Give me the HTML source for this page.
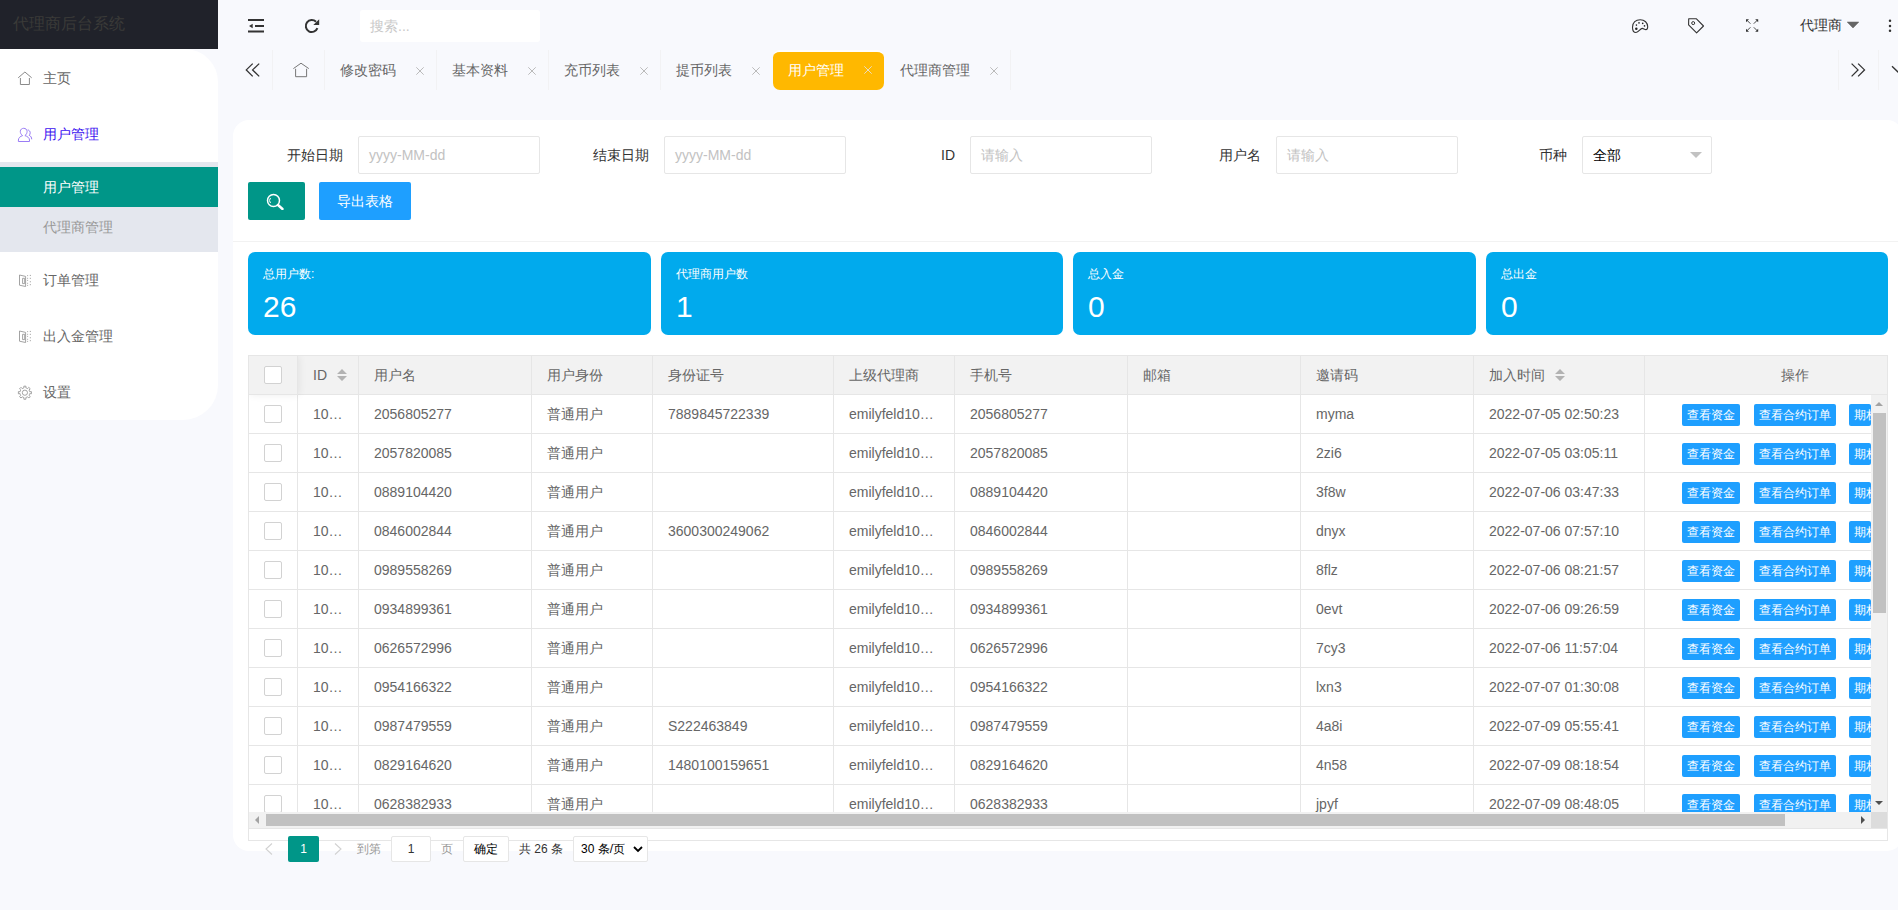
<!DOCTYPE html>
<html><head><meta charset="utf-8"><style>

*{margin:0;padding:0;box-sizing:border-box}
html,body{width:1898px;height:910px;overflow:hidden}
body{background:#f8f9fd;font-family:"Liberation Sans",sans-serif;font-size:14px;color:#666;position:relative}
.abs{position:absolute}
svg{display:block}
/* sidebar */
#logo{left:0;top:0;width:218px;height:49px;background:#20222a}
#logo span{position:absolute;left:13px;top:14px;font-size:16px;line-height:20px;color:#3a3a38;white-space:nowrap}
#side{left:0;top:49px;width:218px;height:371px;background:#fff;border-radius:0 33px 35px 0}
.mi{position:absolute;left:0;width:218px;height:56px}
.mi .ic{position:absolute;left:18px;top:21px}
.mi .tx{position:absolute;left:43px;top:19px;line-height:18px;font-size:14px;color:#666;white-space:nowrap}
#sub{left:0;top:162px;width:218px;height:90px;background:#e4e7ee}
/* header */
.hico{position:absolute}
#search{left:360px;top:10px;width:180px;height:32px;background:#fff;border-radius:3px}
#search span{position:absolute;left:10px;top:7px;line-height:18px;color:#c9c9c9;font-size:14px}
/* tabs */
.sep{position:absolute;top:50px;width:1px;height:40px;background:#f2f2f4}
.tab{position:absolute;top:51px;height:39px}
.tab .t{position:absolute;left:16px;top:10px;line-height:18px;font-size:14px;color:#666;white-space:nowrap}
.tab .x{position:absolute;top:16px}
/* card */
#card{left:233px;top:120px;width:1670px;height:731px;background:#fff;border-radius:16px}
.lbl{position:absolute;top:146px;line-height:18px;font-size:14px;color:#333;white-space:nowrap;text-align:right}
.inp{position:absolute;top:136px;width:182px;height:38px;border:1px solid #e6e6e6;border-radius:2px;background:#fff}
.inp span{position:absolute;left:10px;top:9px;line-height:18px;color:#c2c2c2;font-size:14px;white-space:nowrap}
.btn{position:absolute;top:182px;height:38px;border-radius:2px;color:#fff}
#hline{left:233px;top:241px;width:1665px;height:1px;background:#f2f2f2}
.stat{position:absolute;top:252px;width:403px;height:83px;background:#01aaed;border-radius:7px;color:#fff}
.stat .a{position:absolute;left:15px;top:14px;font-size:12px;line-height:16px;white-space:nowrap}
.stat .b{position:absolute;left:15px;top:37px;font-size:30px;line-height:36px}
/* table */
#tbl{left:248px;top:355px;width:1640px;height:486px;border:1px solid #e6e6e6;background:#fff;overflow:hidden}
#thead{position:absolute;left:0;top:0;width:1638px;height:39px;background:#f2f2f2;border-bottom:1px solid #e6e6e6}
.vl{position:absolute;width:1px;background:#e6e6e6}
.hl{position:absolute;height:1px;background:#e6e6e6;left:0}
.th{position:absolute;top:10px;line-height:18px;font-size:14px;color:#666;white-space:nowrap}
.td{position:absolute;line-height:18px;font-size:14px;color:#666;white-space:nowrap}
.cb{position:absolute;width:18px;height:18px;border:1px solid #d2d2d2;border-radius:2px;background:#fff}
.ob{position:absolute;height:22px;line-height:22px;background:#1e9fff;color:#fff;font-size:12px;border-radius:2px;padding:0 5px;white-space:nowrap;overflow:hidden}

</style></head><body>
<div id="logo" class="abs"><span>代理商后台系统</span></div>
<div id="side" class="abs"></div>
<div id="sub" class="abs"></div>
<div class="abs" style="left:0;top:167px;width:218px;height:40px;background:#009688"></div>
<div class="abs" style="left:43px;top:178px;line-height:18px;color:#fff;white-space:nowrap">用户管理</div>
<div class="abs" style="left:43px;top:218px;line-height:18px;color:#999;white-space:nowrap">代理商管理</div>
<div class="mi" style="top:50px"><div class="tx" style="color:#666">主页</div></div>
<div class="mi" style="top:106px"><div class="tx" style="color:#3d12f0">用户管理</div></div>
<div class="mi" style="top:252px"><div class="tx" style="color:#666">订单管理</div></div>
<div class="mi" style="top:308px"><div class="tx" style="color:#666">出入金管理</div></div>
<div class="mi" style="top:364px"><div class="tx" style="color:#666">设置</div></div>
<div id="search" class="abs"><span>搜索...</span></div>
<div class="abs" style="left:1800px;top:16px;line-height:18px;color:#333;white-space:nowrap">代理商</div>
<div class="abs" style="left:1847px;top:22px;width:0;height:0;border-left:6px solid transparent;border-right:6px solid transparent;border-top:6px solid #555"></div>
<div class="sep" style="left:272px"></div>
<div class="sep" style="left:324px"></div>
<div class="sep" style="left:436px"></div>
<div class="sep" style="left:548px"></div>
<div class="sep" style="left:660px"></div>
<div class="sep" style="left:1010px"></div>
<div class="sep" style="left:1838px"></div>
<div class="sep" style="left:1878px"></div>
<div class="tab" style="left:324px;width:112px"><div class="t">修改密码</div><div class="x" style="left:92px"><svg width="8" height="8" viewBox="0 0 8 8"><path d="M0.3 0.3 L7.7 7.7 M7.7 0.3 L0.3 7.7" stroke="#bbb" stroke-width="1"/></svg></div></div>
<div class="tab" style="left:436px;width:112px"><div class="t">基本资料</div><div class="x" style="left:92px"><svg width="8" height="8" viewBox="0 0 8 8"><path d="M0.3 0.3 L7.7 7.7 M7.7 0.3 L0.3 7.7" stroke="#bbb" stroke-width="1"/></svg></div></div>
<div class="tab" style="left:548px;width:112px"><div class="t">充币列表</div><div class="x" style="left:92px"><svg width="8" height="8" viewBox="0 0 8 8"><path d="M0.3 0.3 L7.7 7.7 M7.7 0.3 L0.3 7.7" stroke="#bbb" stroke-width="1"/></svg></div></div>
<div class="tab" style="left:660px;width:112px"><div class="t">提币列表</div><div class="x" style="left:92px"><svg width="8" height="8" viewBox="0 0 8 8"><path d="M0.3 0.3 L7.7 7.7 M7.7 0.3 L0.3 7.7" stroke="#bbb" stroke-width="1"/></svg></div></div>
<div class="tab" style="left:773px;top:50px;height:40px;width:111px;background:#ffb800;border-top:2px solid #fff;border-radius:7px"><div class="t" style="left:15px;top:9px;color:#fff">用户管理</div><div class="x" style="left:91px;top:14px"><svg width="8" height="8" viewBox="0 0 8 8"><path d="M0.3 0.3 L7.7 7.7 M7.7 0.3 L0.3 7.7" stroke="#eadcc0" stroke-width="1"/></svg></div></div>
<div class="tab" style="left:884px;width:126px"><div class="t">代理商管理</div><div class="x" style="left:106px"><svg width="8" height="8" viewBox="0 0 8 8"><path d="M0.3 0.3 L7.7 7.7 M7.7 0.3 L0.3 7.7" stroke="#bbb" stroke-width="1"/></svg></div></div>
<div id="card" class="abs"></div>
<div class="lbl" style="left:248px;width:95px">开始日期</div>
<div class="inp" style="left:358px"><span>yyyy-MM-dd</span></div>
<div class="lbl" style="left:554px;width:95px">结束日期</div>
<div class="inp" style="left:664px"><span>yyyy-MM-dd</span></div>
<div class="lbl" style="left:860px;width:95px">ID</div>
<div class="inp" style="left:970px"><span>请输入</span></div>
<div class="lbl" style="left:1166px;width:95px">用户名</div>
<div class="inp" style="left:1276px"><span>请输入</span></div>
<div class="lbl" style="left:1472px;width:95px">币种</div>
<div class="inp" style="left:1582px;width:130px"><span style="color:#000">全部</span><div class="abs" style="left:107px;top:15px;width:0;height:0;border-left:6px solid transparent;border-right:6px solid transparent;border-top:6px solid #c2c2c2"></div></div>
<div class="btn" style="left:248px;width:57px;background:#009688"><div class="abs" style="left:18px;top:11px"><svg width="19" height="17" viewBox="0 0 19 17" fill="none" stroke="#fff" stroke-width="1.5"><circle cx="7.5" cy="7.5" r="6"/><path d="M12 12 L16.5 16" stroke-width="2.4" stroke-linecap="round"/><path d="M4.5 5 A3.8 3.8 0 0 0 4.5 10" stroke-width="1"/></svg></div></div>
<div class="btn" style="left:319px;width:92px;background:#1e9fff"><div class="abs" style="left:18px;top:10px;line-height:18px;white-space:nowrap">导出表格</div></div>
<div id="hline" class="abs"></div>
<div class="stat" style="left:248px;width:403px"><div class="a">总用户数:</div><div class="b">26</div></div>
<div class="stat" style="left:661px;width:402px"><div class="a">代理商用户数</div><div class="b">1</div></div>
<div class="stat" style="left:1073px;width:403px"><div class="a">总入金</div><div class="b">0</div></div>
<div class="stat" style="left:1486px;width:402px"><div class="a">总出金</div><div class="b">0</div></div>
<div id="tbl" class="abs"><div class="vl" style="left:48px;top:0;height:460px"></div><div class="vl" style="left:109px;top:0;height:460px"></div><div class="vl" style="left:282px;top:0;height:460px"></div><div class="vl" style="left:403px;top:0;height:460px"></div><div class="vl" style="left:584px;top:0;height:460px"></div><div class="vl" style="left:705px;top:0;height:460px"></div><div class="vl" style="left:878px;top:0;height:460px"></div><div class="vl" style="left:1051px;top:0;height:460px"></div><div class="vl" style="left:1224px;top:0;height:460px"></div><div class="vl" style="left:1395px;top:0;height:460px"></div><div id="thead"></div><div class="vl" style="left:48px;top:0;height:39px"></div><div class="vl" style="left:109px;top:0;height:39px"></div><div class="vl" style="left:282px;top:0;height:39px"></div><div class="vl" style="left:403px;top:0;height:39px"></div><div class="vl" style="left:584px;top:0;height:39px"></div><div class="vl" style="left:705px;top:0;height:39px"></div><div class="vl" style="left:878px;top:0;height:39px"></div><div class="vl" style="left:1051px;top:0;height:39px"></div><div class="vl" style="left:1224px;top:0;height:39px"></div><div class="vl" style="left:1395px;top:0;height:39px"></div><div class="th" style="left:64px">ID</div><div class="th" style="left:125px">用户名</div><div class="th" style="left:298px">用户身份</div><div class="th" style="left:419px">身份证号</div><div class="th" style="left:600px">上级代理商</div><div class="th" style="left:721px">手机号</div><div class="th" style="left:894px">邮箱</div><div class="th" style="left:1067px">邀请码</div><div class="th" style="left:1240px">加入时间</div><div class="abs" style="left:88px;top:13px"><svg width="10" height="12" viewBox="0 0 10 12"><path d="M5 0 L10 5 H0 Z M0 7 H10 L5 12 Z" fill="#b2b2b2"/></svg></div><div class="abs" style="left:1306px;top:13px"><svg width="10" height="12" viewBox="0 0 10 12"><path d="M5 0 L10 5 H0 Z M0 7 H10 L5 12 Z" fill="#b2b2b2"/></svg></div><div class="cb" style="left:15px;top:10px"></div><div class="th" style="left:1532px">操作</div><div class="hl" style="top:77px;width:1638px"></div><div class="cb" style="left:15px;top:49px"></div><div class="td" style="left:64px;top:49px">10…</div><div class="td" style="left:125px;top:49px">2056805277</div><div class="td" style="left:298px;top:49px">普通用户</div><div class="td" style="left:419px;top:49px">7889845722339</div><div class="td" style="left:600px;top:49px">emilyfeld10…</div><div class="td" style="left:721px;top:49px">2056805277</div><div class="td" style="left:1067px;top:49px">myma</div><div class="td" style="left:1240px;top:49px">2022-07-05 02:50:23</div><div class="ob" style="left:1433px;top:48px">查看资金</div><div class="ob" style="left:1505px;top:48px">查看合约订单</div><div class="ob" style="left:1600px;top:48px;width:22px;padding:0 0 0 5px">期权订单</div><div class="hl" style="top:116px;width:1638px"></div><div class="cb" style="left:15px;top:88px"></div><div class="td" style="left:64px;top:88px">10…</div><div class="td" style="left:125px;top:88px">2057820085</div><div class="td" style="left:298px;top:88px">普通用户</div><div class="td" style="left:600px;top:88px">emilyfeld10…</div><div class="td" style="left:721px;top:88px">2057820085</div><div class="td" style="left:1067px;top:88px">2zi6</div><div class="td" style="left:1240px;top:88px">2022-07-05 03:05:11</div><div class="ob" style="left:1433px;top:87px">查看资金</div><div class="ob" style="left:1505px;top:87px">查看合约订单</div><div class="ob" style="left:1600px;top:87px;width:22px;padding:0 0 0 5px">期权订单</div><div class="hl" style="top:155px;width:1638px"></div><div class="cb" style="left:15px;top:127px"></div><div class="td" style="left:64px;top:127px">10…</div><div class="td" style="left:125px;top:127px">0889104420</div><div class="td" style="left:298px;top:127px">普通用户</div><div class="td" style="left:600px;top:127px">emilyfeld10…</div><div class="td" style="left:721px;top:127px">0889104420</div><div class="td" style="left:1067px;top:127px">3f8w</div><div class="td" style="left:1240px;top:127px">2022-07-06 03:47:33</div><div class="ob" style="left:1433px;top:126px">查看资金</div><div class="ob" style="left:1505px;top:126px">查看合约订单</div><div class="ob" style="left:1600px;top:126px;width:22px;padding:0 0 0 5px">期权订单</div><div class="hl" style="top:194px;width:1638px"></div><div class="cb" style="left:15px;top:166px"></div><div class="td" style="left:64px;top:166px">10…</div><div class="td" style="left:125px;top:166px">0846002844</div><div class="td" style="left:298px;top:166px">普通用户</div><div class="td" style="left:419px;top:166px">3600300249062</div><div class="td" style="left:600px;top:166px">emilyfeld10…</div><div class="td" style="left:721px;top:166px">0846002844</div><div class="td" style="left:1067px;top:166px">dnyx</div><div class="td" style="left:1240px;top:166px">2022-07-06 07:57:10</div><div class="ob" style="left:1433px;top:165px">查看资金</div><div class="ob" style="left:1505px;top:165px">查看合约订单</div><div class="ob" style="left:1600px;top:165px;width:22px;padding:0 0 0 5px">期权订单</div><div class="hl" style="top:233px;width:1638px"></div><div class="cb" style="left:15px;top:205px"></div><div class="td" style="left:64px;top:205px">10…</div><div class="td" style="left:125px;top:205px">0989558269</div><div class="td" style="left:298px;top:205px">普通用户</div><div class="td" style="left:600px;top:205px">emilyfeld10…</div><div class="td" style="left:721px;top:205px">0989558269</div><div class="td" style="left:1067px;top:205px">8flz</div><div class="td" style="left:1240px;top:205px">2022-07-06 08:21:57</div><div class="ob" style="left:1433px;top:204px">查看资金</div><div class="ob" style="left:1505px;top:204px">查看合约订单</div><div class="ob" style="left:1600px;top:204px;width:22px;padding:0 0 0 5px">期权订单</div><div class="hl" style="top:272px;width:1638px"></div><div class="cb" style="left:15px;top:244px"></div><div class="td" style="left:64px;top:244px">10…</div><div class="td" style="left:125px;top:244px">0934899361</div><div class="td" style="left:298px;top:244px">普通用户</div><div class="td" style="left:600px;top:244px">emilyfeld10…</div><div class="td" style="left:721px;top:244px">0934899361</div><div class="td" style="left:1067px;top:244px">0evt</div><div class="td" style="left:1240px;top:244px">2022-07-06 09:26:59</div><div class="ob" style="left:1433px;top:243px">查看资金</div><div class="ob" style="left:1505px;top:243px">查看合约订单</div><div class="ob" style="left:1600px;top:243px;width:22px;padding:0 0 0 5px">期权订单</div><div class="hl" style="top:311px;width:1638px"></div><div class="cb" style="left:15px;top:283px"></div><div class="td" style="left:64px;top:283px">10…</div><div class="td" style="left:125px;top:283px">0626572996</div><div class="td" style="left:298px;top:283px">普通用户</div><div class="td" style="left:600px;top:283px">emilyfeld10…</div><div class="td" style="left:721px;top:283px">0626572996</div><div class="td" style="left:1067px;top:283px">7cy3</div><div class="td" style="left:1240px;top:283px">2022-07-06 11:57:04</div><div class="ob" style="left:1433px;top:282px">查看资金</div><div class="ob" style="left:1505px;top:282px">查看合约订单</div><div class="ob" style="left:1600px;top:282px;width:22px;padding:0 0 0 5px">期权订单</div><div class="hl" style="top:350px;width:1638px"></div><div class="cb" style="left:15px;top:322px"></div><div class="td" style="left:64px;top:322px">10…</div><div class="td" style="left:125px;top:322px">0954166322</div><div class="td" style="left:298px;top:322px">普通用户</div><div class="td" style="left:600px;top:322px">emilyfeld10…</div><div class="td" style="left:721px;top:322px">0954166322</div><div class="td" style="left:1067px;top:322px">lxn3</div><div class="td" style="left:1240px;top:322px">2022-07-07 01:30:08</div><div class="ob" style="left:1433px;top:321px">查看资金</div><div class="ob" style="left:1505px;top:321px">查看合约订单</div><div class="ob" style="left:1600px;top:321px;width:22px;padding:0 0 0 5px">期权订单</div><div class="hl" style="top:389px;width:1638px"></div><div class="cb" style="left:15px;top:361px"></div><div class="td" style="left:64px;top:361px">10…</div><div class="td" style="left:125px;top:361px">0987479559</div><div class="td" style="left:298px;top:361px">普通用户</div><div class="td" style="left:419px;top:361px">S222463849</div><div class="td" style="left:600px;top:361px">emilyfeld10…</div><div class="td" style="left:721px;top:361px">0987479559</div><div class="td" style="left:1067px;top:361px">4a8i</div><div class="td" style="left:1240px;top:361px">2022-07-09 05:55:41</div><div class="ob" style="left:1433px;top:360px">查看资金</div><div class="ob" style="left:1505px;top:360px">查看合约订单</div><div class="ob" style="left:1600px;top:360px;width:22px;padding:0 0 0 5px">期权订单</div><div class="hl" style="top:428px;width:1638px"></div><div class="cb" style="left:15px;top:400px"></div><div class="td" style="left:64px;top:400px">10…</div><div class="td" style="left:125px;top:400px">0829164620</div><div class="td" style="left:298px;top:400px">普通用户</div><div class="td" style="left:419px;top:400px">1480100159651</div><div class="td" style="left:600px;top:400px">emilyfeld10…</div><div class="td" style="left:721px;top:400px">0829164620</div><div class="td" style="left:1067px;top:400px">4n58</div><div class="td" style="left:1240px;top:400px">2022-07-09 08:18:54</div><div class="ob" style="left:1433px;top:399px">查看资金</div><div class="ob" style="left:1505px;top:399px">查看合约订单</div><div class="ob" style="left:1600px;top:399px;width:22px;padding:0 0 0 5px">期权订单</div><div class="hl" style="top:467px;width:1638px"></div><div class="cb" style="left:15px;top:439px"></div><div class="td" style="left:64px;top:439px">10…</div><div class="td" style="left:125px;top:439px">0628382933</div><div class="td" style="left:298px;top:439px">普通用户</div><div class="td" style="left:600px;top:439px">emilyfeld10…</div><div class="td" style="left:721px;top:439px">0628382933</div><div class="td" style="left:1067px;top:439px">jpyf</div><div class="td" style="left:1240px;top:439px">2022-07-09 08:48:05</div><div class="ob" style="left:1433px;top:438px">查看资金</div><div class="ob" style="left:1505px;top:438px">查看合约订单</div><div class="ob" style="left:1600px;top:438px;width:22px;padding:0 0 0 5px">期权订单</div><div class="abs" style="left:1622px;top:39px;width:16px;height:418px;background:#f1f1f1"></div><div class="abs" style="left:1624px;top:57px;width:13px;height:200px;background:#c1c1c1"></div><div class="abs" style="left:1626px;top:46px;width:0;height:0;border-left:4px solid transparent;border-right:4px solid transparent;border-bottom:4px solid #a3a3a3"></div><div class="abs" style="left:1626px;top:445px;width:0;height:0;border-left:4px solid transparent;border-right:4px solid transparent;border-top:4px solid #505050"></div><div class="abs" style="left:0;top:456px;width:1622px;height:16px;background:#f1f1f1"></div><div class="abs" style="left:1622px;top:456px;width:16px;height:16px;background:#dcdcdc"></div><div class="abs" style="left:17px;top:458px;width:1519px;height:12px;background:#c1c1c1"></div><div class="abs" style="left:6px;top:460px;width:0;height:0;border-top:4px solid transparent;border-bottom:4px solid transparent;border-right:4px solid #a3a3a3"></div><div class="abs" style="left:1612px;top:460px;width:0;height:0;border-top:4px solid transparent;border-bottom:4px solid transparent;border-left:4px solid #505050"></div><div class="hl" style="top:472px;width:1638px"></div><div class="abs" style="left:0;top:0;width:49px;height:39px;box-shadow:1px 0 8px rgba(0,0,0,.07);z-index:5"></div></div>
<div class="abs" style="left:265px;top:843px"><svg width="8" height="12" viewBox="0 0 8 12"><path d="M7 0.5 L1 6 L7 11.5" fill="none" stroke="#d2d2d2" stroke-width="1.1"/></svg></div>
<div class="abs" style="left:288px;top:836px;width:31px;height:26px;background:#009688;border-radius:2px;color:#fff;font-size:12px;line-height:26px;text-align:center">1</div>
<div class="abs" style="left:334px;top:843px"><svg width="8" height="12" viewBox="0 0 8 12"><path d="M1 0.5 L7 6 L1 11.5" fill="none" stroke="#d2d2d2" stroke-width="1.1"/></svg></div>
<div class="abs" style="left:357px;top:841px;font-size:12px;line-height:16px;color:#999;white-space:nowrap">到第</div>
<div class="abs" style="left:391px;top:836px;width:40px;height:26px;border:1px solid #e6e6e6;border-radius:2px;background:#fff;font-size:12px;line-height:24px;text-align:center;color:#333">1</div>
<div class="abs" style="left:441px;top:841px;font-size:12px;line-height:16px;color:#999">页</div>
<div class="abs" style="left:463px;top:836px;width:46px;height:26px;border:1px solid #e6e6e6;border-radius:2px;background:#fff;font-size:12px;line-height:24px;text-align:center;color:#000">确定</div>
<div class="abs" style="left:519px;top:841px;font-size:12px;line-height:16px;color:#333;white-space:nowrap">共 26 条</div>
<div class="abs" style="left:573px;top:836px;width:75px;height:26px;border:1px solid #e6e6e6;border-radius:2px;background:#fff"><div class="abs" style="left:7px;top:4px;font-size:12px;line-height:16px;color:#000;white-space:nowrap">30 条/页</div><div class="abs" style="left:59px;top:9px"><svg width="10" height="7" viewBox="0 0 10 7"><path d="M1 1 L5 5 L9 1" fill="none" stroke="#000" stroke-width="1.8"/></svg></div></div>
<svg class="abs" style="left:0;top:0;z-index:50" width="1898" height="910" viewBox="0 0 1898 910"><path d="M18.2,77.8 L24.9,72 L31.7,77.8 M20.4,78 V84.5 H29.4 V78" fill="none" stroke="#8a8a8a" stroke-width="1"/><path d="M22.6,135.6 C21,134.6 20.3,133 20.3,131.3 C20.3,129.5 21.9,128.3 23.7,128.3 C25.5,128.3 27.1,129.5 27.1,131.3 C27.1,133 26.4,134.6 24.9,135.6 C27.5,136.3 29.5,138 29.5,140 V141.5 H18.4 V140 C18.4,138 20.2,136.3 22.6,135.6 Z M27.8,129.8 C29.4,130.3 30.2,131.5 30.2,132.8 C30.2,133.8 29.8,134.8 29.2,135.3 C30.8,136 31.7,137.5 31.7,139.3" fill="none" stroke="#9a7cf5" stroke-width="1"/><path d="M19.5,275 L25.6,276.4 V286.5 L19.5,285.2 Z M22.6,278.3 H24.7 V283.6 H22.6 Z" fill="none" stroke="#999" stroke-width="0.9"/><rect x="27.1" y="275.1" width="1" height="1" fill="#aaa"/><rect x="27.1" y="277.8" width="1" height="1" fill="#aaa"/><rect x="27.1" y="279.9" width="1" height="1" fill="#aaa"/><rect x="27.1" y="282.8" width="1" height="1" fill="#aaa"/><rect x="27.1" y="284.9" width="1" height="1" fill="#aaa"/><rect x="29.8" y="274.9" width="1.1" height="1.1" fill="#aaa"/><rect x="29.8" y="277.8" width="1.1" height="1.1" fill="#aaa"/><rect x="29.8" y="281.2" width="1.1" height="1.1" fill="#aaa"/><rect x="29.8" y="284.1" width="1.1" height="1.1" fill="#aaa"/><path d="M19.5,331 L25.6,332.4 V342.5 L19.5,341.2 Z M22.6,334.3 H24.7 V339.6 H22.6 Z" fill="none" stroke="#999" stroke-width="0.9"/><rect x="27.1" y="331.1" width="1" height="1" fill="#aaa"/><rect x="27.1" y="333.8" width="1" height="1" fill="#aaa"/><rect x="27.1" y="335.9" width="1" height="1" fill="#aaa"/><rect x="27.1" y="338.8" width="1" height="1" fill="#aaa"/><rect x="27.1" y="340.9" width="1" height="1" fill="#aaa"/><rect x="29.8" y="330.9" width="1.1" height="1.1" fill="#aaa"/><rect x="29.8" y="333.8" width="1.1" height="1.1" fill="#aaa"/><rect x="29.8" y="337.2" width="1.1" height="1.1" fill="#aaa"/><rect x="29.8" y="340.1" width="1.1" height="1.1" fill="#aaa"/><path d="M23.03,388.17 L23.93,387.90 L23.85,386.18 L25.95,386.18 L25.87,387.90 L26.78,388.17 L27.61,388.62 L28.76,387.35 L30.25,388.84 L28.98,389.99 L29.43,390.83 L29.70,391.73 L31.42,391.65 L31.42,393.75 L29.70,393.67 L29.43,394.58 L28.98,395.41 L30.25,396.56 L28.76,398.05 L27.61,396.78 L26.77,397.23 L25.87,397.50 L25.95,399.22 L23.85,399.22 L23.93,397.50 L23.02,397.23 L22.19,396.78 L21.04,398.05 L19.55,396.56 L20.82,395.41 L20.37,394.57 L20.10,393.67 L18.38,393.75 L18.38,391.65 L20.10,391.73 L20.37,390.82 L20.82,389.99 L19.55,388.84 L21.04,387.35 L22.19,388.62 Z" fill="none" stroke="#999" stroke-width="0.9"/><circle cx="24.9" cy="392.7" r="2.6" fill="none" stroke="#999" stroke-width="0.9"/><path d="M248,20 H264 M255,26 H264 M248,31.4 H264" stroke="#333" stroke-width="2"/><path d="M249,26 L252.7,23.8 V28.2 Z" fill="#333"/><path d="M317.4,28.15 A6,6 0 1 1 316.04,21.76" fill="none" stroke="#333" stroke-width="2"/><path d="M319.2,19.2 V25 H313.3 Z" fill="#333"/><path d="M1636,32.5 C1633.8,32.5 1632.5,30.3 1632.5,27.2 C1632.5,22.6 1635.8,19.7 1640.2,19.7 C1644.6,19.7 1647.7,22.8 1647.7,26.8 C1647.7,28.6 1647,29.6 1645.9,29.6 C1644.5,29.6 1643.5,28.4 1642.2,28.4 C1640.2,28.4 1638.8,32.5 1636,32.5 Z" fill="none" stroke="#333" stroke-width="1.1"/><circle cx="1636.4" cy="25.1" r="0.8" fill="#222"/><circle cx="1639" cy="22.9" r="0.8" fill="#222"/><circle cx="1642.7" cy="23.4" r="0.8" fill="#222"/><circle cx="1644.5" cy="25.9" r="0.8" fill="#222"/><circle cx="1636.3" cy="28.8" r="1.25" fill="#222"/><path d="M1688.7,18.7 H1696.2 L1703.5,26 L1696.6,32.9 L1688.6,24.9 Z" fill="none" stroke="#333" stroke-width="1.1" stroke-linejoin="round"/><circle cx="1693.2" cy="23.1" r="1.5" fill="none" stroke="#333" stroke-width="1"/><path d="M1746,19.3 L1749,19.3 L1746,22.3 Z" fill="#333"/><path d="M1747,20.3 L1750.4,23.700000000000003" stroke="#333" stroke-width="0.9"/><path d="M1758.2,19.3 L1755.2,19.3 L1758.2,22.3 Z" fill="#333"/><path d="M1757.2,20.3 L1753.8,23.700000000000003" stroke="#333" stroke-width="0.9"/><path d="M1746,31.7 L1749,31.7 L1746,28.7 Z" fill="#333"/><path d="M1747,30.7 L1750.4,27.299999999999997" stroke="#333" stroke-width="0.9"/><path d="M1758.2,31.7 L1755.2,31.7 L1758.2,28.7 Z" fill="#333"/><path d="M1757.2,30.7 L1753.8,27.299999999999997" stroke="#333" stroke-width="0.9"/><path d="M1847,21.8 H1859 L1853,27.9 Z" fill="#666"/><circle cx="1890" cy="20.8" r="1.25" fill="#333"/><circle cx="1890" cy="25.9" r="1.25" fill="#333"/><circle cx="1890" cy="30.8" r="1.25" fill="#333"/><path d="M252.7,63.6 L246.3,69.9 L252.7,76.4 M259.2,63.6 L252.6,69.9 L259.2,76.4" fill="none" stroke="#333" stroke-width="1.3"/><path d="M293.4,68.6 L301,63.2 L308.8,68.6 M295.6,68.8 V76.7 H306.6 V68.8" fill="none" stroke="#777" stroke-width="1"/><path d="M1851.6,63.6 L1858,69.9 L1851.6,76.4 M1845.1,63.6 L1851.5,69.9 L1845.1,76.4" fill="none" stroke="#333" stroke-width="1.3" transform="translate(6.5,0)"/><path d="M1892,66.2 L1899,73 L1906,66.2" fill="none" stroke="#333" stroke-width="1.3"/></svg>
</body></html>
